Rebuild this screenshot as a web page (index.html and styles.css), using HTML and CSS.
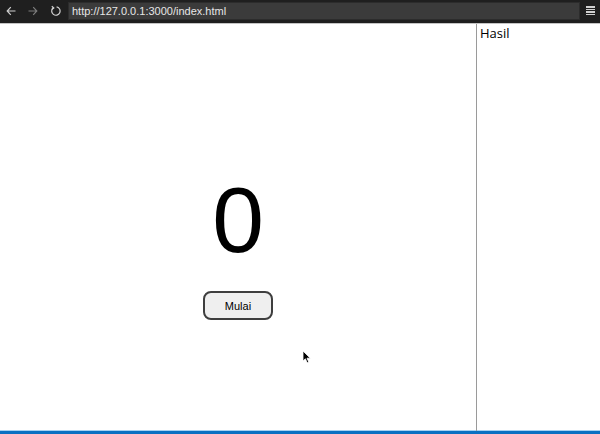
FILE: index.html
```html
<!DOCTYPE html>
<html>
<head>
<meta charset="utf-8">
<link rel="stylesheet" href="styles.css">
</head>
<body>
<div class="toolbar">
  <div class="nav">
    <svg class="ico" width="10" height="12" viewBox="0 0 10 12"><path d="M9.5 6H1.2M4.8 2.2L1.2 6l3.6 3.8" fill="none" stroke="#cfcfcf" stroke-width="1.2"/></svg>
    <svg class="ico" width="10" height="12" viewBox="0 0 10 12"><path d="M0.5 6h8.3M5.2 2.2L8.8 6 5.2 9.8" fill="none" stroke="#7d7d7d" stroke-width="1.2"/></svg>
    <svg class="ico" width="11" height="12" viewBox="0 0 11 12"><path d="M3.2 2.8A4.2 4.2 0 1 0 6.6 1.9" fill="none" stroke="#cfcfcf" stroke-width="1.2"/><path d="M1.8 1.2l2 1.8-2 1.5" fill="none" stroke="#cfcfcf" stroke-width="1.2"/></svg>
  </div>
  <div class="url">http://127.0.0.1:3000/index.html</div>
  <div class="menu">
    <span></span><span></span><span></span><span></span>
  </div>
</div>
<div class="page">
  <main class="stage">
    <div class="count">0</div>
    <button class="start">Mulai</button>
  </main>
  <aside class="results">Hasil</aside>
</div>
<svg class="cursor" width="10" height="14" viewBox="0 0 10 14"><path d="M1 1v10l2.4-2.2 1.8 4 1.6-.7-1.8-3.9h3.3z" fill="#000" stroke="#fff" stroke-width="0.8"/></svg>
</body>
</html>
```
FILE: styles.css
```css
html, body {
  margin: 0;
  padding: 0;
}
body {
  width: 600px;
  height: 434px;
  overflow: hidden;
  background: #fff;
  font-family: "Liberation Sans", Arial, sans-serif;
  position: relative;
}
.toolbar {
  height: 24px;
  background: #1f1f1f;
  border-bottom: 1px solid #c4c4c4;
  display: flex;
  align-items: center;
  box-sizing: border-box;
  padding: 0 5px 2px 6px;
}
.nav {
  display: flex;
  align-items: center;
  gap: 12px;
  width: 62px;
}
.ico {
  display: block;
}
.url {
  flex: 0 0 512px;
  height: 18px;
  background: #3b3b3b;
  border: 1px solid #2c2c2c;
  box-sizing: border-box;
  color: #e6e6e6;
  font-size: 11px;
  line-height: 16px;
  padding-left: 3px;
}
.menu {
  flex: 1;
  display: flex;
  flex-direction: column;
  align-items: flex-end;
  gap: 1px;
}
.menu span {
  display: block;
  width: 9px;
  height: 1.5px;
  background: #d0d0d0;
}
.page {
  display: flex;
  height: 407px;
  border-bottom: 3px solid #0a70c2;
  box-shadow: inset 0 -1px 0 #a6d2f2;
}
.stage {
  flex: 0 0 476px;
  display: flex;
  flex-direction: column;
  align-items: center;
  padding-top: 149px;
  box-sizing: border-box;
}
.count {
  font-size: 93px;
  line-height: 94px;
  color: #000;
}
.start {
  margin-top: 24px;
  width: 70px;
  height: 29px;
  border: 2px solid #3e3e3e;
  border-radius: 8px;
  background: #efefef;
  font-family: "Liberation Sans", Arial, sans-serif;
  font-size: 11px;
  color: #000;
  padding: 0;
}
.results {
  flex: 1;
  border-left: 1px solid #9a9a9a;
  padding: 1px 3px;
  font-family: "Open Sans", "Liberation Sans", sans-serif;
  font-size: 13px;
  color: #000;
  line-height: 16px;
}
.cursor {
  position: absolute;
  left: 302px;
  top: 350px;
}
```
